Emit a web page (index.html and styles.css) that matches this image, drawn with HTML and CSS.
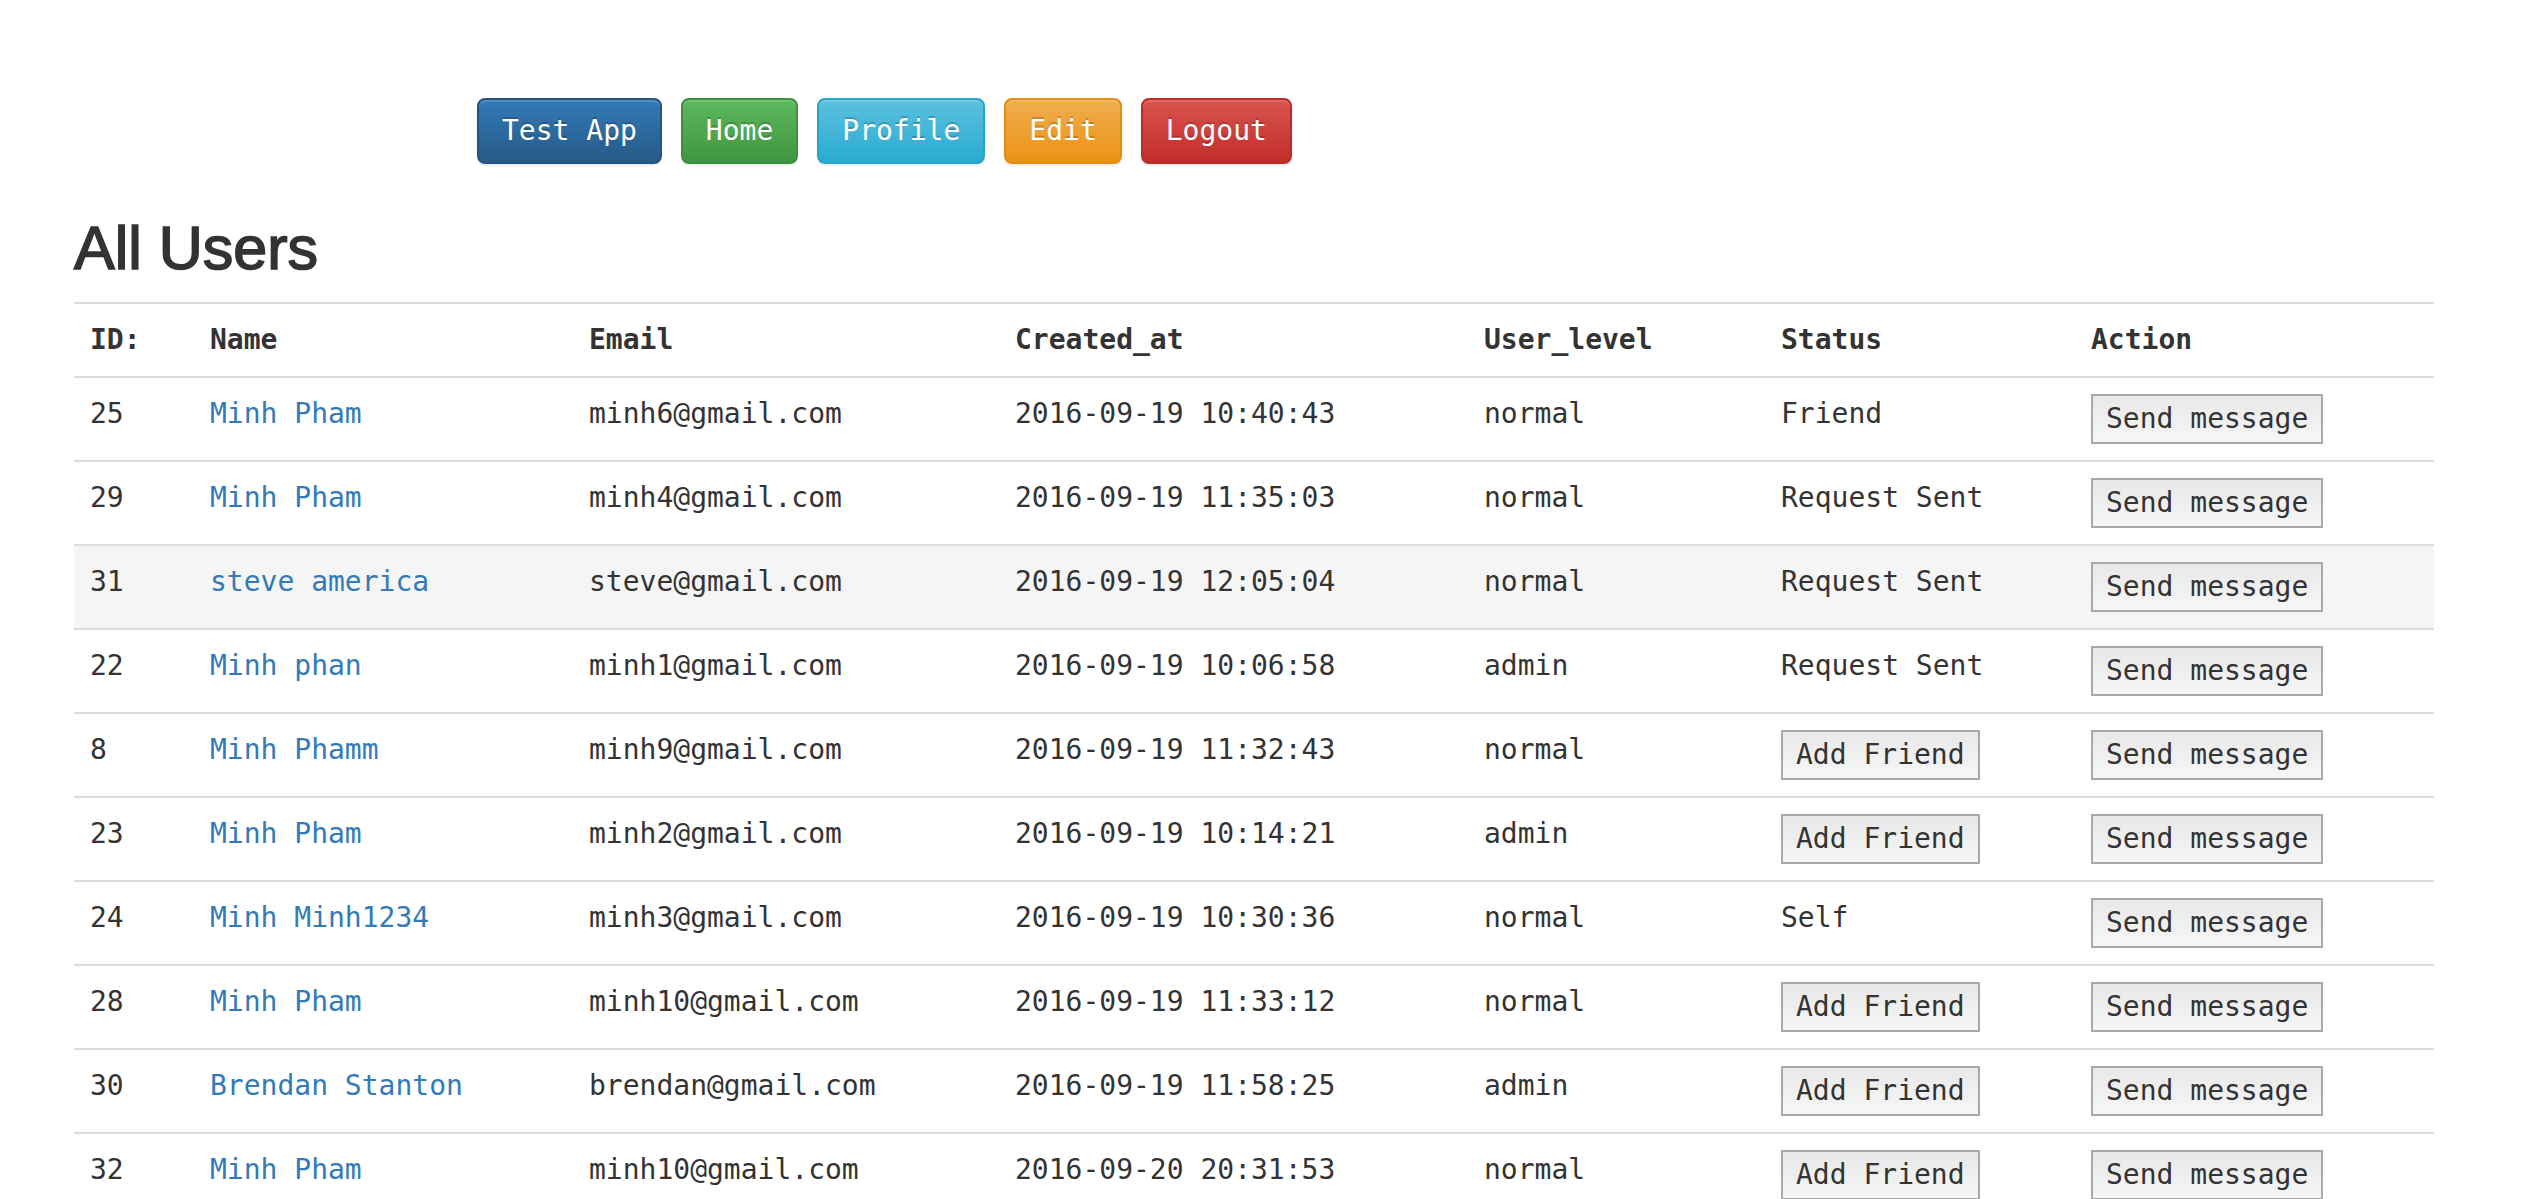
FILE: index.html
```html
<!DOCTYPE html>
<html lang="en">
<head>
<meta charset="utf-8">
<title>All Users</title>
<link rel="stylesheet" href="styles.css">
</head>
<body>
<nav class="topnav">
  <a class="nbtn nbtn-primary" href="#">Test App</a>
  <a class="nbtn nbtn-success" href="#">Home</a>
  <a class="nbtn nbtn-info" href="#">Profile</a>
  <a class="nbtn nbtn-warning" href="#">Edit</a>
  <a class="nbtn nbtn-danger" href="#">Logout</a>
</nav>
<main class="page">
  <h2 class="title">All Users</h2>
  <table class="users">
    <colgroup>
      <col class="c-id"><col class="c-name"><col class="c-email"><col class="c-created"><col class="c-level"><col class="c-status"><col class="c-action">
    </colgroup>
    <thead>
      <tr><th>ID:</th><th>Name</th><th>Email</th><th>Created_at</th><th>User_level</th><th>Status</th><th>Action</th></tr>
    </thead>
    <tbody>
      <tr><td>25</td><td><a href="#">Minh Pham</a></td><td>minh6@gmail.com</td><td>2016-09-19 10:40:43</td><td>normal</td><td>Friend</td><td><button class="sbtn">Send message</button></td></tr>
      <tr><td>29</td><td><a href="#">Minh Pham</a></td><td>minh4@gmail.com</td><td>2016-09-19 11:35:03</td><td>normal</td><td>Request Sent</td><td><button class="sbtn">Send message</button></td></tr>
      <tr class="hover"><td>31</td><td><a href="#">steve america</a></td><td>steve@gmail.com</td><td>2016-09-19 12:05:04</td><td>normal</td><td>Request Sent</td><td><button class="sbtn">Send message</button></td></tr>
      <tr><td>22</td><td><a href="#">Minh phan</a></td><td>minh1@gmail.com</td><td>2016-09-19 10:06:58</td><td>admin</td><td>Request Sent</td><td><button class="sbtn">Send message</button></td></tr>
      <tr><td>8</td><td><a href="#">Minh Phamm</a></td><td>minh9@gmail.com</td><td>2016-09-19 11:32:43</td><td>normal</td><td><button class="sbtn">Add Friend</button></td><td><button class="sbtn">Send message</button></td></tr>
      <tr><td>23</td><td><a href="#">Minh Pham</a></td><td>minh2@gmail.com</td><td>2016-09-19 10:14:21</td><td>admin</td><td><button class="sbtn">Add Friend</button></td><td><button class="sbtn">Send message</button></td></tr>
      <tr><td>24</td><td><a href="#">Minh Minh1234</a></td><td>minh3@gmail.com</td><td>2016-09-19 10:30:36</td><td>normal</td><td>Self</td><td><button class="sbtn">Send message</button></td></tr>
      <tr><td>28</td><td><a href="#">Minh Pham</a></td><td>minh10@gmail.com</td><td>2016-09-19 11:33:12</td><td>normal</td><td><button class="sbtn">Add Friend</button></td><td><button class="sbtn">Send message</button></td></tr>
      <tr><td>30</td><td><a href="#">Brendan Stanton</a></td><td>brendan@gmail.com</td><td>2016-09-19 11:58:25</td><td>admin</td><td><button class="sbtn">Add Friend</button></td><td><button class="sbtn">Send message</button></td></tr>
      <tr><td>32</td><td><a href="#">Minh Pham</a></td><td>minh10@gmail.com</td><td>2016-09-20 20:31:53</td><td>normal</td><td><button class="sbtn">Add Friend</button></td><td><button class="sbtn">Send message</button></td></tr>
    </tbody>
  </table>
</main>
</body>
</html>
```

FILE: styles.css
```css
html, body {
  margin: 0;
  padding: 0;
  background: #fff;
}
body {
  font-family: "DejaVu Sans Mono", "Liberation Mono", monospace;
  font-size: 28px;
  line-height: 40px;
  color: #333;
}
a {
  color: #337ab7;
  text-decoration: none;
}

/* top navigation buttons */
.topnav {
  display: flex;
  gap: 19px;
  padding: 98px 0 0 477px;
}
.nbtn {
  display: inline-block;
  padding: 11px 23px;
  border: 2px solid transparent;
  border-radius: 8px;
  color: #fff;
  font-size: 28px;
  line-height: 40px;
  text-shadow: 0 -2px 0 rgba(0,0,0,.2);
  box-shadow: inset 0 2px 0 rgba(255,255,255,.15), 0 2px 2px rgba(0,0,0,.075);
}
.nbtn-primary { background: linear-gradient(#337ab7, #265a88); border-color: #245580; }
.nbtn-success { background: linear-gradient(#5cb85c, #419641); border-color: #3e8f3e; }
.nbtn-info    { background: linear-gradient(#5bc0de, #2aabd2); border-color: #28a4c9; }
.nbtn-warning { background: linear-gradient(#f0ad4e, #eb9316); border-color: #e38d13; }
.nbtn-danger  { background: linear-gradient(#d9534f, #c12e2a); border-color: #b92c28; }

/* page */
.page {
  padding: 0 0 0 74px;
}
.title {
  margin: 51px 0 21px;
  font-family: "Liberation Sans", Arial, sans-serif;
  font-size: 61px;
  font-weight: normal;
  line-height: 66px;
  color: #333;
  -webkit-text-stroke: 1.6px #333;
}

/* table */
.users {
  width: 2360px;
  table-layout: fixed;
  border-collapse: collapse;
  border-spacing: 0;
}
.c-id { width: 120px; }
.c-name { width: 379px; }
.c-email { width: 426px; }
.c-created { width: 469px; }
.c-level { width: 297px; }
.c-status { width: 310px; }
.c-action { width: 359px; }

.users th,
.users td {
  padding: 16px;
  text-align: left;
  vertical-align: top;
  white-space: nowrap;
}
.users th {
  font-weight: bold;
  border-top: 2px solid #ddd;
  border-bottom: 2px solid #ddd;
}
.users td {
  border-top: 2px solid #ddd;
}
.users tr.hover td {
  background: #f5f5f5;
}

.sbtn {
  display: inline-block;
  margin: 0;
  padding: 3px 13px;
  border: 2px solid #a9a9a9;
  border-radius: 0;
  background: linear-gradient(#e8e8e8, #f6f6f6);
  color: #333;
  font-family: "DejaVu Sans Mono", "Liberation Mono", monospace;
  font-size: 28px;
  line-height: 40px;
  vertical-align: top;
}
```
